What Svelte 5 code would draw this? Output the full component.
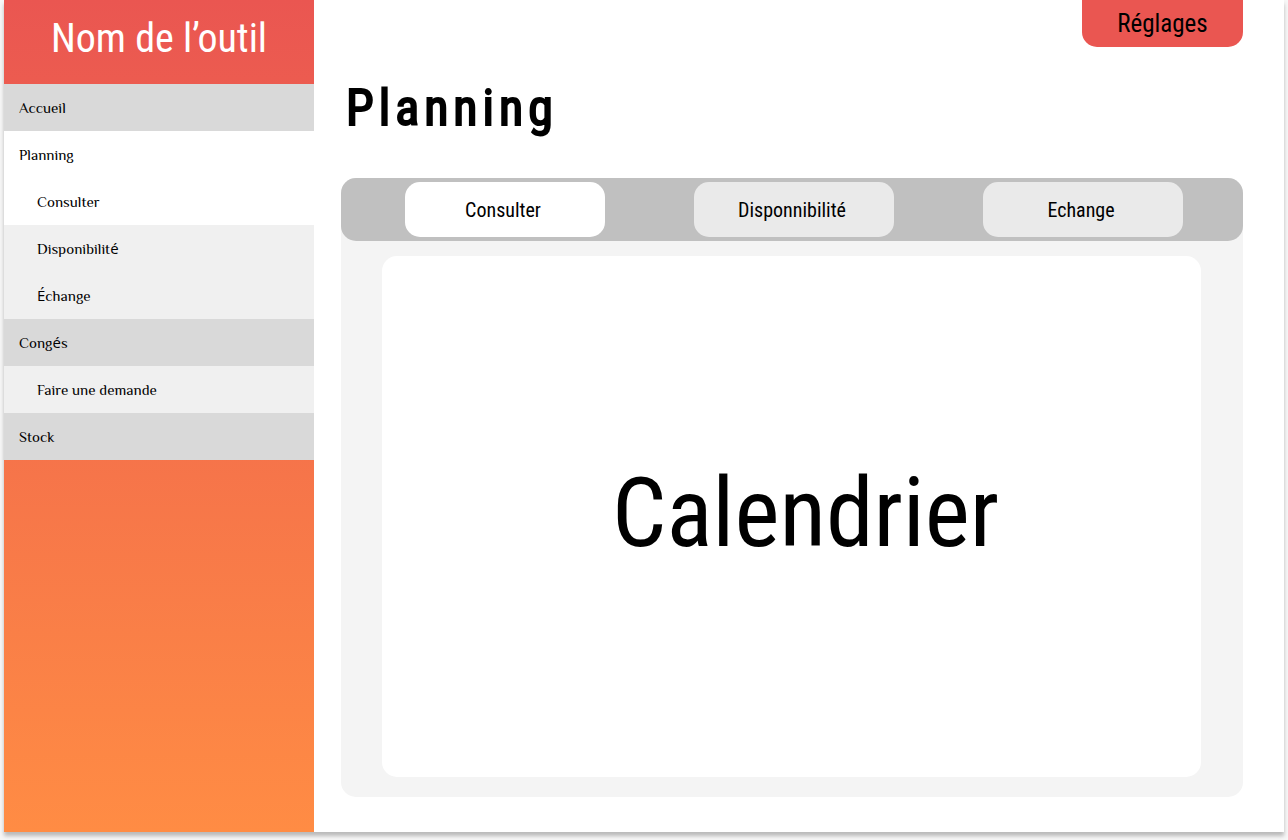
<script>
  const nav = [
    { label: 'Accueil', tone: 'section' },
    { label: 'Planning', tone: 'active' },
    { label: 'Consulter', tone: 'active', sub: true },
    { label: 'Disponibilité', tone: 'plain', sub: true },
    { label: 'Échange', tone: 'plain', sub: true },
    { label: 'Congés', tone: 'section' },
    { label: 'Faire une demande', tone: 'plain', sub: true },
    { label: 'Stock', tone: 'section' }
  ];
  const tabs = ['Consulter', 'Disponnibilité', 'Echange'];
  let selected = $state('Consulter');
</script>

<div class="page">
  <aside class="sidebar">
    <div class="brand">Nom de l’outil</div>
    <nav>
      {#each nav as item}
        <a href="#top" class={item.tone} class:sub={item.sub}>{#each item.label.split(/([éÉ])/) as part}{#if part === 'é' || part === 'É'}<span class="accent">{part}</span>{:else}{part}{/if}{/each}</a>
      {/each}
    </nav>
  </aside>
  <main>
    <header><button class="settings" type="button">Réglages</button></header>
    <h1>Planning</h1>
    <section class="panel">
      <div class="tabs">
        {#each tabs as tab}
          <button type="button" class:selected={selected === tab} onclick={() => (selected = tab)}>{tab}</button>
        {/each}
      </div>
      <div class="card">Calendrier</div>
    </section>
  </main>
</div>

<style>
  :global(body) {
    background: #f7f7f7;
  }
  .page {
    box-sizing: border-box;
    display: flex;
    min-height: calc(100vh - 8px);
    margin: 0 4px 8px;
    background: #fff;
    box-shadow: 0 4px 4px rgba(0, 0, 0, 0.25);
    color: #000;
    font-family: "Roboto Condensed", "Liberation Sans Narrow", Roboto, sans-serif;
  }
  .sidebar {
    flex: 0 0 310px;
    background: linear-gradient(#ea5651, #ff8c44);
  }
  .brand {
    height: 84px;
    box-sizing: border-box;
    padding-top: 15px;
    color: #fff;
    font-size: 40px;
    line-height: 48px;
    text-align: center;
  }
  nav a {
    display: block;
    padding-left: 15px;
    color: #000;
    font-family: Philosopher, "Noto Sans", sans-serif;
    font-size: 15px;
    line-height: 47px;
    text-decoration: none;
  }
  nav .sub {
    padding-left: 33px;
  }
  .accent {
    font-family: "Open Sans", sans-serif;
    line-height: 1;
  }
  .section {
    background: #d9d9d9;
  }
  .active {
    background: #fff;
  }
  .plain {
    background: #f0f0f0;
  }
  main {
    display: flex;
    flex: 1;
    flex-direction: column;
    min-width: 0;
    padding: 0 41px 35px 27px;
  }
  header {
    display: flex;
    justify-content: flex-end;
  }
  button {
    border: 0;
    color: #000;
    font-family: inherit;
  }
  .settings {
    width: 161px;
    height: 47px;
    padding: 0;
    border-radius: 0 0 15px 15px;
    background: #ea5651;
    font-size: 25px;
  }
  h1 {
    margin: 31px 0 40px 5px;
    font-size: 50px;
    font-weight: 400;
    -webkit-text-stroke: 2px #000;
    letter-spacing: 5px;
    line-height: 60px;
  }
  .panel {
    display: flex;
    flex: 1;
    flex-direction: column;
    border-radius: 15px;
    background: #f4f4f4;
  }
  .tabs {
    display: flex;
    justify-content: space-between;
    padding: 4px 60px 4px 64px;
    border-radius: 15px;
    background: #c0c0c0;
  }
  .tabs button {
    width: 200px;
    height: 55px;
    padding: 0 4px 0 0;
    border-radius: 15px;
    background: #eaeaea;
    font-size: 20px;
  }
  .tabs .selected {
    background: #fff;
  }
  .card {
    display: flex;
    flex: 1;
    align-items: center;
    justify-content: center;
    margin: 15px 42px 20px 41px;
    padding: 0 2px 8px 30px;
    border-radius: 15px;
    background: #fff;
    font-size: 96px;
  }
</style>
